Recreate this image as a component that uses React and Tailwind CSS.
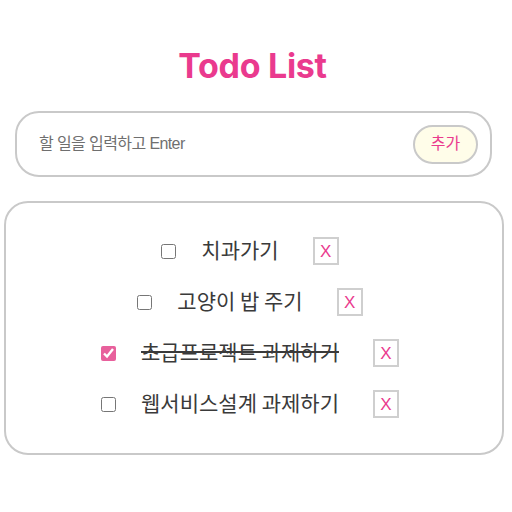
import { useState } from "react";

const initialTodos = [
    { id: 1, text: "치과가기", done: false },
    { id: 2, text: "고양이 밥 주기", done: false },
    { id: 3, text: "초급프로젝트 과제하기", done: true },
    { id: 4, text: "웹서비스설계 과제하기", done: false },
];

const App = () => {
    const [todos, setTodos] = useState(initialTodos);
    const [text, setText] = useState("");

    const addTodo = e => {
        e.preventDefault();
        if (!text.trim()) return;
        setTodos([...todos, { id: Date.now(), text, done: false }]);
        setText("");
    };

    const toggle = id => setTodos(todos.map(t => t.id === id ? { ...t, done: !t.done } : t));
    const remove = id => setTodos(todos.filter(t => t.id !== id));

    return <div className="w-[512px] min-h-[512px] bg-white flex flex-col font-['Liberation_Sans','Noto_Sans_CJK_KR',sans-serif]">
        <h1 className="mt-[48px] pr-[7px] text-center text-[34px] leading-[36px] font-bold text-[#ea3a8e] font-['Inter',sans-serif] tracking-[-0.3px]">Todo List</h1>
        <form onSubmit={addTodo} className="mt-[27px] ml-[15px] w-[477px] h-[66px] border-2 border-[#c9c9c9] rounded-[24px] flex items-center pl-[22px] pr-[12px]">
            <input
                value={text}
                onChange={e => setText(e.target.value)}
                placeholder="할 일을 입력하고 Enter"
                className="flex-1 outline-none text-[16px] tracking-[-0.6px] text-[#333] placeholder:text-[#6f6f6f]"
            />
            <button type="submit" className="w-[65px] h-[39px] rounded-full border-2 border-[#c9c9c9] bg-[#fffde9] text-[#ea3a8e] text-[16px]">추가</button>
        </form>
        <div className="mt-[24px] ml-[4px] w-[500px] h-[254px] border-2 border-[#c9c9c9] rounded-[24px] flex flex-col items-center pt-[34px] gap-[23px] pr-[8px]">
            {todos.map(todo => <div key={todo.id} className="flex items-center h-[28px]">
                <input
                    type="checkbox"
                    checked={todo.done}
                    onChange={() => toggle(todo.id)}
                    className="w-[15px] h-[15px] accent-[#e8609c]"
                />
                <span className={`ml-[25px] text-[21px] leading-[24px] -mt-[4px] text-[#3a3a3a] font-['Noto_Sans_CJK_KR',sans-serif] ${todo.done ? "line-through" : ""}`}>{todo.text}</span>
                <button onClick={() => remove(todo.id)} className="ml-[34px] w-[26px] h-[28px] border-2 border-[#cfcfcf] bg-white text-[#ea3a8e] text-[17px] leading-none flex items-center justify-center">X</button>
            </div>)}
        </div>
    </div>
}

export default App;
